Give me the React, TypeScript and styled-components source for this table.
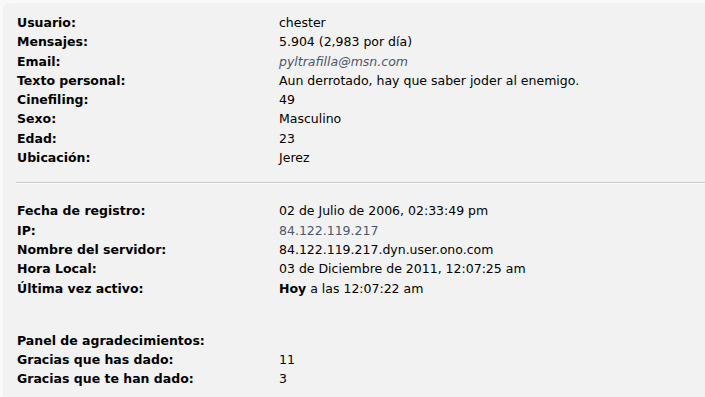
import React from 'react';
import styled, { createGlobalStyle } from 'styled-components';

const GlobalStyle = createGlobalStyle`
  html, body {
    margin: 0;
    padding: 0;
    background: #f9f9f9;
  }
`;

type Row = { label: string; value?: React.ReactNode; tone?: 'link' | 'email' };

const profile: Row[] = [
  { label: 'Usuario:', value: 'chester' },
  { label: 'Mensajes:', value: '5.904 (2,983 por día)' },
  { label: 'Email:', value: 'pyltrafilla@msn.com', tone: 'email' },
  { label: 'Texto personal:', value: 'Aun derrotado, hay que saber joder al enemigo.' },
  { label: 'Cinefiling:', value: '49' },
  { label: 'Sexo:', value: 'Masculino' },
  { label: 'Edad:', value: '23' },
  { label: 'Ubicación:', value: 'Jerez' },
];

const account: Row[] = [
  { label: 'Fecha de registro:', value: '02 de Julio de 2006, 02:33:49 pm' },
  { label: 'IP:', value: '84.122.119.217', tone: 'link' },
  { label: 'Nombre del servidor:', value: '84.122.119.217.dyn.user.ono.com' },
  { label: 'Hora Local:', value: '03 de Diciembre de 2011, 12:07:25 am' },
  {
    label: 'Última vez activo:',
    value: (
      <>
        <strong>Hoy</strong> a las 12:07:22 am
      </>
    ),
  },
];

const thanks: Row[] = [
  { label: 'Panel de agradecimientos:' },
  { label: 'Gracias que has dado:', value: '11' },
  { label: 'Gracias que te han dado:', value: '3' },
];

const InfoList = ({ rows }: { rows: Row[] }) => (
  <List>
    {rows.map((r) => (
      <React.Fragment key={r.label}>
        <Label>{r.label}</Label>
        <Value $tone={r.tone}>{r.value}</Value>
      </React.Fragment>
    ))}
  </List>
);

const App = () => {
  return (
    <>
      <GlobalStyle />
      <Panel>
        <InfoList rows={profile} />
        <Divider />
        <InfoList rows={account} />
        <Gap />
        <InfoList rows={thanks} />
      </Panel>
    </>
  );
};

export default App;

const Panel = styled.div`
  margin: 3px 0 0 3px;
  padding: 10px 0 12px 14px;
  background: #f2f2f2;
  border-top-left-radius: 6px;
  font: 12.5px/19.3px 'DejaVu Sans', Verdana, sans-serif;
  color: #000;
`;

const List = styled.div`
  display: grid;
  grid-template-columns: 262px 1fr;
`;

const Label = styled.div`
  font-weight: bold;
  white-space: nowrap;
`;

const Value = styled.div<{ $tone?: 'link' | 'email' }>`
  white-space: nowrap;
  color: ${(p) => (p.$tone ? '#4a5670' : '#000')};
  font-style: ${(p) => (p.$tone === 'email' ? 'italic' : 'normal')};

  strong {
    font-weight: bold;
  }
`;

const Divider = styled.hr`
  margin: 15px 0 17px -1px;
  border: 0;
  border-top: 1px solid #c8c8c8;
  border-bottom: 1px solid #fbfbfb;
  height: 0;
`;

const Gap = styled.div`
  height: 33px;
`;
